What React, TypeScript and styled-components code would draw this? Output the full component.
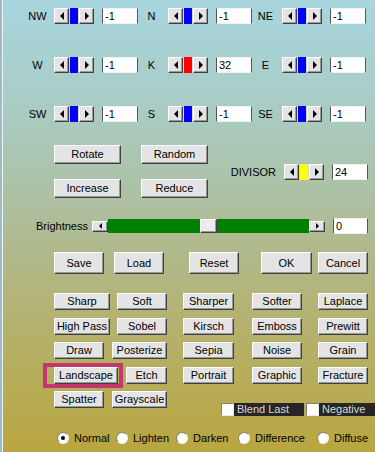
import React from 'react'
import styled, { createGlobalStyle } from 'styled-components'

const GlobalStyle = createGlobalStyle`
  html, body { margin: 0; padding: 0; }
  body {
    font-family: "Liberation Sans", Arial, sans-serif;
    font-size: 11px;
    color: #000;
  }
`

const dirRows = [
  [
    { name: 'NW', value: '-1', thumb: '#0000ff' },
    { name: 'N', value: '-1', thumb: '#0000ff' },
    { name: 'NE', value: '-1', thumb: '#0000ff' },
  ],
  [
    { name: 'W', value: '-1', thumb: '#0000ff' },
    { name: 'K', value: '32', thumb: '#ff0000' },
    { name: 'E', value: '-1', thumb: '#0000ff' },
  ],
  [
    { name: 'SW', value: '-1', thumb: '#0000ff' },
    { name: 'S', value: '-1', thumb: '#0000ff' },
    { name: 'SE', value: '-1', thumb: '#0000ff' },
  ],
]

// [label, width]
const filters: [string, number][][] = [
  [['Sharp', 56], ['Soft', 50], ['Sharper', 51], ['Softer', 50], ['Laplace', 50]],
  [['High Pass', 56], ['Sobel', 50], ['Kirsch', 51], ['Emboss', 50], ['Prewitt', 50]],
  [['Draw', 50], ['Posterize', 55], ['Sepia', 51], ['Noise', 50], ['Grain', 50]],
  [['Landscape', 64], ['Etch', 41], ['Portrait', 51], ['Graphic', 50], ['Fracture', 50]],
  [['Spatter', 50], ['Grayscale', 55]],
]

const modes = ['Normal', 'Lighten', 'Darken', 'Difference', 'Diffuse']

const brightness = { value: 0, min: -255, max: 255 }

export default function App() {
  const trackWidth = 201
  const thumbWidth = 17
  const thumbLeft = Math.round(
    ((brightness.value - brightness.min) / (brightness.max - brightness.min)) * (trackWidth - thumbWidth)
  )

  return (
    <Frame>
      <GlobalStyle />

      <DirSection>
        {dirRows.map((row, i) => (
          <DirRow key={i}>
            {row.map(d => (
              <DirGroup key={d.name}>
                <DirLabel>{d.name}</DirLabel>
                <Spinner thumb={d.thumb} />
                <Field>{d.value}</Field>
              </DirGroup>
            ))}
          </DirRow>
        ))}
      </DirSection>

      <MidRow>
        <ActionGrid>
          <Btn $w={67} $h={19}>Rotate</Btn>
          <Btn $w={67} $h={19}>Random</Btn>
          <Btn $w={67} $h={19}>Increase</Btn>
          <Btn $w={67} $h={19}>Reduce</Btn>
        </ActionGrid>
        <DivisorGroup>
          <DivisorLabel>DIVISOR</DivisorLabel>
          <Spinner thumb="#ffff00" />
          <Field>24</Field>
        </DivisorGroup>
      </MidRow>

      <BrightRow>
        <BrightLabel>Brightness</BrightLabel>
        <Slider>
          <SmallArrow>
            <Tri $dir="left" $size={3} />
          </SmallArrow>
          <GreenTrack>
            <SliderThumb style={{ left: thumbLeft }} />
          </GreenTrack>
          <SmallArrow>
            <Tri $dir="right" $size={3} />
          </SmallArrow>
        </Slider>
        <Field $w={35} $gap={8}>0</Field>
      </BrightRow>

      <DialogRow>
        <Btn $w={50} $h={22}>Save</Btn>
        <Btn $w={50} $h={22}>Load</Btn>
        <Btn $w={50} $h={22}>Reset</Btn>
        <Btn $w={51} $h={22}>OK</Btn>
        <Btn $w={50} $h={22}>Cancel</Btn>
      </DialogRow>

      <FilterGrid>
        {filters.map((row, r) =>
          row.map(([name, w], c) => (
            <FilterBtn key={name} $w={w} $h={17} $start={c === 0} $mark={name === 'Landscape'}>
              {name}
            </FilterBtn>
          ))
        )}
        <Checks>
          <CheckBox />
          <CheckLabel $w={70}>Blend Last</CheckLabel>
          <CheckBox />
          <CheckLabel $w={59}>Negative</CheckLabel>
        </Checks>
      </FilterGrid>

      <RadioRow>
        {modes.map(m => (
          <RadioItem key={m}>
            <Radio $on={m === 'Normal'} />
            {m}
          </RadioItem>
        ))}
      </RadioRow>
    </Frame>
  )
}

function Spinner({ thumb }: { thumb: string }) {
  return (
    <SpinBox>
      <SpinArrow>
        <Tri $dir="left" $size={4} />
      </SpinArrow>
      <SpinThumb $color={thumb} />
      <SpinArrow>
        <Tri $dir="right" $size={4} />
      </SpinArrow>
    </SpinBox>
  )
}

const Frame = styled.div`
  position: relative;
  width: 375px;
  height: 452px;
  overflow: hidden;
  box-sizing: border-box;
  background: linear-gradient(
    180deg,
    #a8d5df 0%,
    #a8cdc6 22%,
    #abc4ae 38%,
    #b0b98c 55%,
    #b5b069 75%,
    #b9a63f 100%
  );
  box-shadow: inset 2px 0 0 #9fbcc2, inset 3px 0 0 #eef4f4;
`

const raised = `
  box-sizing: border-box;
  background: #e4e4e4;
  border: 1px solid;
  border-color: #ffffff #404040 #404040 #ffffff;
  box-shadow: inset -1px -1px #9a9a9a;
`

const Btn = styled.button<{ $w: number; $h: number }>`
  ${raised}
  width: ${p => p.$w}px;
  height: ${p => p.$h}px;
  padding: 0;
  font-family: "Liberation Sans", Arial, sans-serif;
  font-size: 11px;
  color: #000;
  white-space: nowrap;
  line-height: 1;
`

const FilterBtn = styled(Btn)<{ $start: boolean; $mark: boolean }>`
  position: relative;
  justify-self: ${p => (p.$start ? 'start' : 'end')};

  ${p =>
    p.$mark &&
    `
    &::before {
      content: '';
      position: absolute;
      left: -12px;
      right: -6px;
      top: -5px;
      bottom: -5px;
      border: 4px solid #c2386e;
    }
  `}
`

const DirSection = styled.div`
  display: flex;
  flex-direction: column;
  gap: 33px;
  padding: 8px 0 0 24px;
`

const DirRow = styled.div`
  display: flex;
`

const DirGroup = styled.div`
  display: flex;
  align-items: center;
  width: 114px;
  height: 16px;
`

const DirLabel = styled.span`
  width: 27px;
  margin-right: 3px;
  text-align: center;
`

const SpinBox = styled.div`
  display: flex;
  width: 40px;
  height: 16px;
  background: #d6d6d6;
  flex-shrink: 0;
`

const SpinArrow = styled.div`
  ${raised}
  width: 15px;
  height: 16px;
  display: flex;
  align-items: center;
  justify-content: center;
`

const SpinThumb = styled.div<{ $color: string }>`
  width: 8px;
  margin: 0 1px;
  background: ${p => p.$color};
`

const Tri = styled.span<{ $dir: 'left' | 'right'; $size: number }>`
  width: 0;
  height: 0;
  border-top: ${p => p.$size}px solid transparent;
  border-bottom: ${p => p.$size}px solid transparent;
  ${p =>
    p.$dir === 'left'
      ? `border-right: ${p.$size}px solid #000;`
      : `border-left: ${p.$size}px solid #000;`}
`

const Field = styled.div<{ $w?: number; $gap?: number }>`
  box-sizing: border-box;
  width: ${p => p.$w ?? 36}px;
  height: 16px;
  margin-left: ${p => p.$gap ?? 8}px;
  padding-left: 2px;
  background: #fff;
  border-top: 1px solid #f2f2f2;
  border-bottom: 1px solid #f2f2f2;
  border-left: 1px solid #555;
  border-right: 1px solid #555;
  font-size: 11px;
  line-height: 14px;
`

const MidRow = styled.div`
  display: flex;
  align-items: center;
  margin-top: 23px;
  padding: 0 7px 0 54px;
`

const ActionGrid = styled.div`
  display: grid;
  grid-template-columns: 67px 67px;
  column-gap: 20px;
  row-gap: 15px;
`

const DivisorGroup = styled.div`
  display: flex;
  align-items: center;
  margin-left: auto;
  margin-top: 1px;
`

const DivisorLabel = styled.span`
  margin-right: 8px;
`

const BrightRow = styled.div`
  display: flex;
  align-items: center;
  height: 16px;
  margin-top: 20px;
  padding-left: 36px;
`

const BrightLabel = styled.span`
  width: 56px;
`

const Slider = styled.div`
  display: flex;
  align-items: center;
  width: 233px;
  height: 14px;
`

const SmallArrow = styled.div`
  ${raised}
  width: 16px;
  height: 11px;
  display: flex;
  align-items: center;
  justify-content: center;
`

const GreenTrack = styled.div`
  position: relative;
  flex: 1;
  height: 14px;
  background: #008000;
`

const SliderThumb = styled.div`
  ${raised}
  position: absolute;
  top: 0;
  width: 17px;
  height: 14px;
  background: #ececec;
`

const DialogRow = styled.div`
  display: grid;
  grid-template-columns: 60px 75px 72px 57px 50px;
  margin-top: 18px;
  padding-left: 54px;
`

const FilterGrid = styled.div`
  display: grid;
  grid-template-columns: 57px 56px 67px 68px 66px;
  grid-auto-rows: 17px;
  row-gap: 7.5px;
  margin-top: 19px;
  padding-left: 54px;
`

const Checks = styled.div`
  grid-row: 5;
  grid-column: 3 / 6;
  justify-self: start;
  align-self: start;
  display: flex;
  align-items: center;
  margin: 12px 0 0 52px;
  height: 13px;
`

const CheckBox = styled.span`
  box-sizing: border-box;
  width: 13px;
  height: 13px;
  background: #fff;
  border: 1px solid;
  border-color: #808080 #e8e8e8 #e8e8e8 #808080;
  margin-left: 2px;
`

const CheckLabel = styled.span<{ $w: number }>`
  width: ${p => p.$w}px;
  height: 13px;
  box-sizing: border-box;
  padding-left: 3px;
  background: #262626;
  color: #dadada;
  line-height: 13px;
  white-space: nowrap;
`

const RadioRow = styled.div`
  display: grid;
  grid-template-columns: 59px 60px 62px 79px auto;
  margin-top: 24px;
  padding-left: 57px;
  height: 12px;
`

const RadioItem = styled.label`
  display: flex;
  align-items: center;
  gap: 5px;
  white-space: nowrap;
`

const Radio = styled.span<{ $on: boolean }>`
  position: relative;
  box-sizing: border-box;
  width: 12px;
  height: 12px;
  border-radius: 50%;
  background: #fff;
  border: 1px solid;
  border-color: #808080 #f4f4f4 #f4f4f4 #808080;
  flex-shrink: 0;

  ${p =>
    p.$on &&
    `
    &::after {
      content: '';
      position: absolute;
      left: 3px;
      top: 3px;
      width: 4px;
      height: 4px;
      border-radius: 50%;
      background: #000;
    }
  `}
`
